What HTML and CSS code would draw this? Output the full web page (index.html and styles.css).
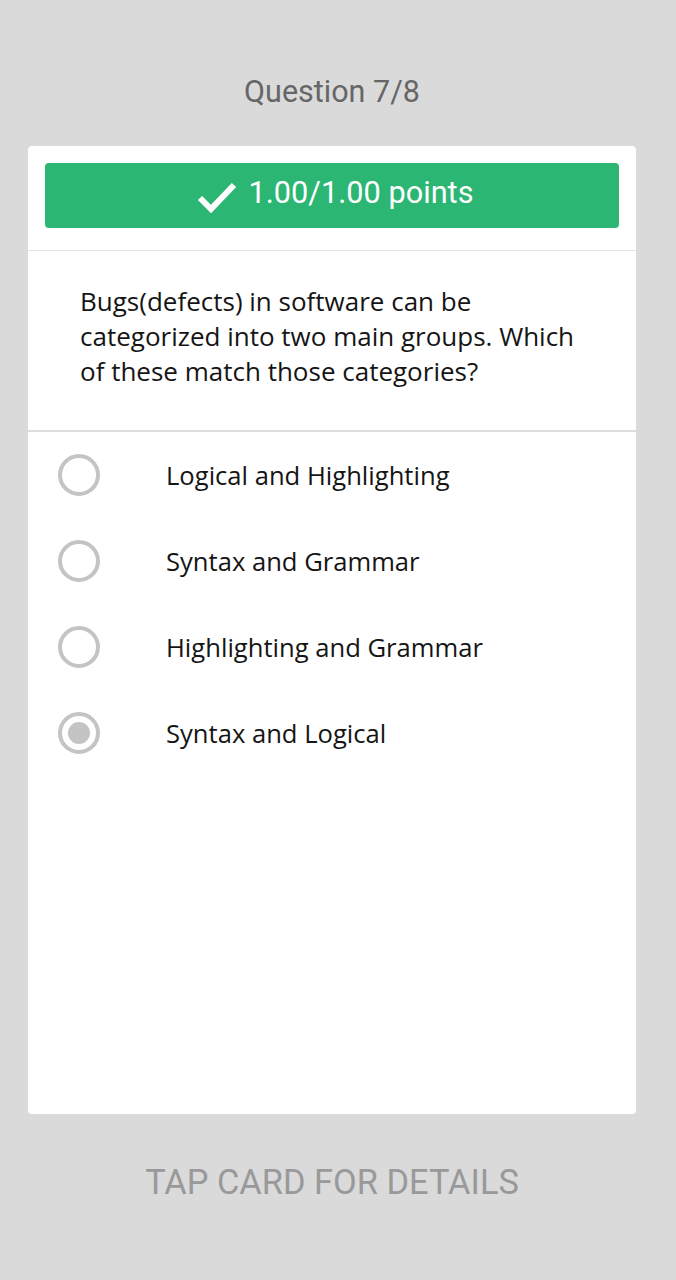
FILE: index.html
```html
<!DOCTYPE html>
<html>
<head>
<meta charset="utf-8">
<link rel="stylesheet" href="styles.css">
</head>
<body>
<div class="page">
  <div class="title">Question 7/8</div>
  <div class="card">
    <div class="head">
      <div class="score">
        <svg class="check" width="40" height="32" viewBox="0 0 40 32"><path d="M3 17 L14 28 L37 4" fill="none" stroke="#fff" stroke-width="6"/></svg>
        <span>1.00/1.00 points</span>
      </div>
    </div>
    <div class="question">Bugs(defects) in software can be categorized into two main groups. Which of these match those categories?</div>
    <div class="options">
      <div class="option"><span class="radio"></span><span class="label">Logical and Highlighting</span></div>
      <div class="option"><span class="radio"></span><span class="label">Syntax and Grammar</span></div>
      <div class="option"><span class="radio"></span><span class="label">Highlighting and Grammar</span></div>
      <div class="option"><span class="radio selected"></span><span class="label">Syntax and Logical</span></div>
    </div>
  </div>
  <div class="footer">TAP CARD FOR DETAILS</div>
</div>
</body>
</html>
```
FILE: styles.css
```css
html, body {
  margin: 0;
  padding: 0;
  background: #dadada;
}
.page {
  width: 664px;
  height: 1280px;
  display: flex;
  flex-direction: column;
  align-items: center;
}
.title {
  margin-top: 74px;
  height: 36px;
  line-height: 36px;
  font-family: Roboto, sans-serif;
  font-size: 30.5px;
  color: #666;
  text-align: center;
}
.card {
  margin-top: 36px;
  width: 608px;
  height: 968px;
  background: #fff;
  border-radius: 4px;
  box-sizing: border-box;
  display: flex;
  flex-direction: column;
}
.head {
  padding: 17px 17px 22px;
  border-bottom: 1px solid #e2e2e2;
}
.score {
  height: 65px;
  padding-left: 6px;
  background: #2bb673;
  border-radius: 4px;
  display: flex;
  align-items: center;
  justify-content: center;
  gap: 12px;
  color: #fff;
  font-family: Roboto, sans-serif;
  font-size: 30.7px;
}
.score span {
  margin-top: -6px;
}
.check {
  margin-top: 3px;
}
.question {
  padding: 33px 50px 41px 52px;
  font-family: "Open Sans", sans-serif;
  font-size: 26px;
  line-height: 35px;
  color: #151515;
  border-bottom: 2px solid #dcdcdc;
}
.options {
  display: flex;
  flex-direction: column;
}
.option {
  height: 86px;
  display: flex;
  align-items: center;
  padding-left: 30px;
}
.radio {
  width: 42px;
  height: 42px;
  box-sizing: border-box;
  border: 4px solid #c4c4c4;
  border-radius: 50%;
  display: flex;
  align-items: center;
  justify-content: center;
}
.radio.selected::after {
  content: "";
  width: 22px;
  height: 22px;
  border-radius: 50%;
  background: #c4c4c4;
}
.label {
  margin-left: 66px;
  font-family: "Open Sans", sans-serif;
  font-size: 25.6px;
  color: #151515;
}
.footer {
  margin-top: 48px;
  font-family: Roboto, sans-serif;
  font-size: 34.4px;
  color: #999;
  text-align: center;
}
```
